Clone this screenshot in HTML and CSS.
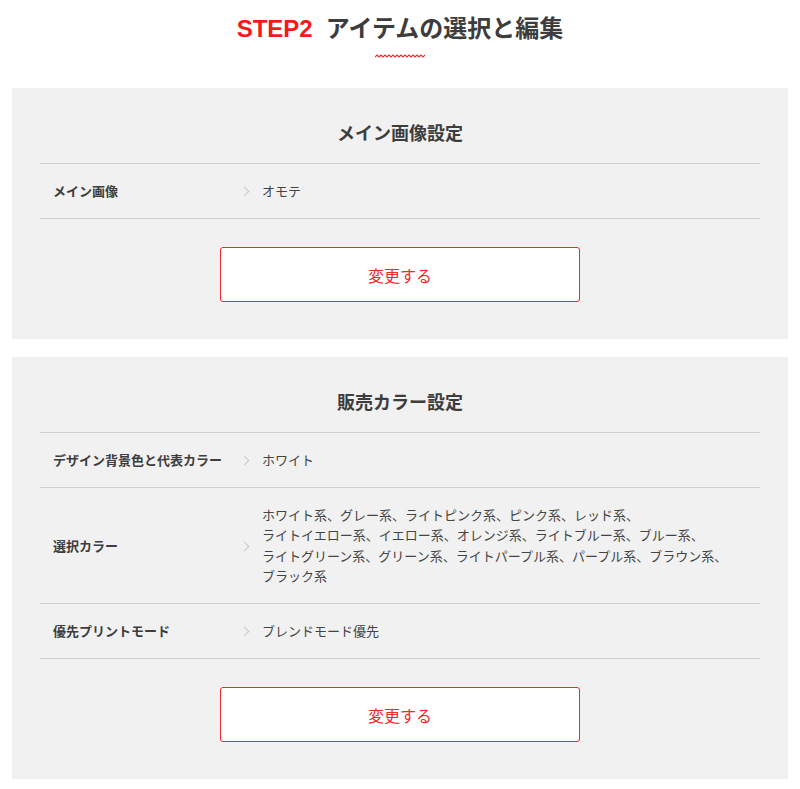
FILE: index.html
```html
<!DOCTYPE html>
<html lang="ja">
<head>
<meta charset="utf-8">
<title>STEP2 アイテムの選択と編集</title>
<link rel="stylesheet" href="styles.css">
</head>
<body>
<div class="page">
  <header class="step-head">
    <h1 class="step-title"><span class="step-no">STEP2</span>アイテムの選択と編集</h1>
    <svg class="wave" width="50" height="4" viewBox="0 0 50 4" aria-hidden="true">
      <polyline points="0,3 2,1 4,3 6,1 8,3 10,1 12,3 14,1 16,3 18,1 20,3 22,1 24,3 26,1 28,3 30,1 32,3 34,1 36,3 38,1 40,3 42,1 44,3 46,1 48,3 50,1" fill="none" stroke="#f52a2a" stroke-width="1.2"/>
    </svg>
  </header>

  <section class="panel">
    <h2 class="panel-title">メイン画像設定</h2>
    <dl class="spec">
      <div class="row">
        <dt>メイン画像</dt>
        <dd>オモテ</dd>
      </div>
    </dl>
    <div class="actions"><button class="change-btn">変更する</button></div>
  </section>

  <section class="panel">
    <h2 class="panel-title">販売カラー設定</h2>
    <dl class="spec">
      <div class="row">
        <dt>デザイン背景色と代表カラー</dt>
        <dd>ホワイト</dd>
      </div>
      <div class="row">
        <dt>選択カラー</dt>
        <dd class="multi">ホワイト系、グレー系、ライトピンク系、ピンク系、レッド系、<br>ライトイエロー系、イエロー系、オレンジ系、ライトブルー系、ブルー系、<br>ライトグリーン系、グリーン系、ライトパープル系、パープル系、ブラウン系、<br>ブラック系</dd>
      </div>
      <div class="row">
        <dt>優先プリントモード</dt>
        <dd>ブレンドモード優先</dd>
      </div>
    </dl>
    <div class="actions"><button class="change-btn">変更する</button></div>
  </section>
</div>
</body>
</html>
```

FILE: styles.css
```css
* { box-sizing: border-box; }

html, body {
  margin: 0;
  padding: 0;
  background: #fff;
}

body {
  font-family: "Noto Sans CJK JP", "Noto Sans", "Liberation Sans", sans-serif;
  color: #444;
}

.page {
  padding: 0 12px 12px;
}

.step-head {
  display: flex;
  flex-direction: column;
  align-items: center;
  padding-top: 10px;
  height: 88px;
}

.step-title {
  margin: 0;
  font-size: 24px;
  line-height: 34px;
  font-weight: 700;
  color: #3d3d3d;
  white-space: nowrap;
}

.step-no {
  color: #f41a1a;
  font-family: "Liberation Sans", "Noto Sans CJK JP", sans-serif;
  margin-right: 13px;
}

.wave {
  display: block;
  margin-top: 8px;
}

.panel {
  background: #f1f1f1;
  padding: 32px 28px 37px;
  margin-bottom: 18px;
}

.panel-title {
  margin: 0 0 19px;
  text-align: center;
  font-size: 18px;
  line-height: 24px;
  font-weight: 700;
  color: #3d3d3d;
}

.spec {
  margin: 0;
  border-top: 1px solid #cfcfcf;
}

.row {
  display: flex;
  align-items: center;
  border-bottom: 1px solid #cfcfcf;
  padding: 17px 0;
}

.row dt {
  width: 200px;
  flex: none;
  padding-left: 13px;
  font-size: 13px;
  line-height: 20px;
  font-weight: 700;
  color: #3d3d3d;
}

.row dd {
  position: relative;
  margin: 0;
  padding-left: 22px;
  font-size: 13px;
  line-height: 20px;
  color: #444;
}

.row dd.multi {
  line-height: 20.3px;
}

.row dd::before {
  content: "";
  position: absolute;
  left: 1px;
  top: 50%;
  width: 6px;
  height: 6px;
  margin-top: -3px;
  border-top: 1px solid #c8c8c8;
  border-right: 1px solid #c8c8c8;
  transform: rotate(45deg);
}

.actions {
  display: flex;
  justify-content: center;
  padding-top: 28px;
}

.change-btn {
  width: 360px;
  height: 55px;
  background: #fff;
  border: 1px solid #f0282d;
  border-radius: 3px;
  color: #f0282d;
  font-family: "Noto Sans CJK JP", sans-serif;
  font-size: 16px;
  cursor: pointer;
}
```
